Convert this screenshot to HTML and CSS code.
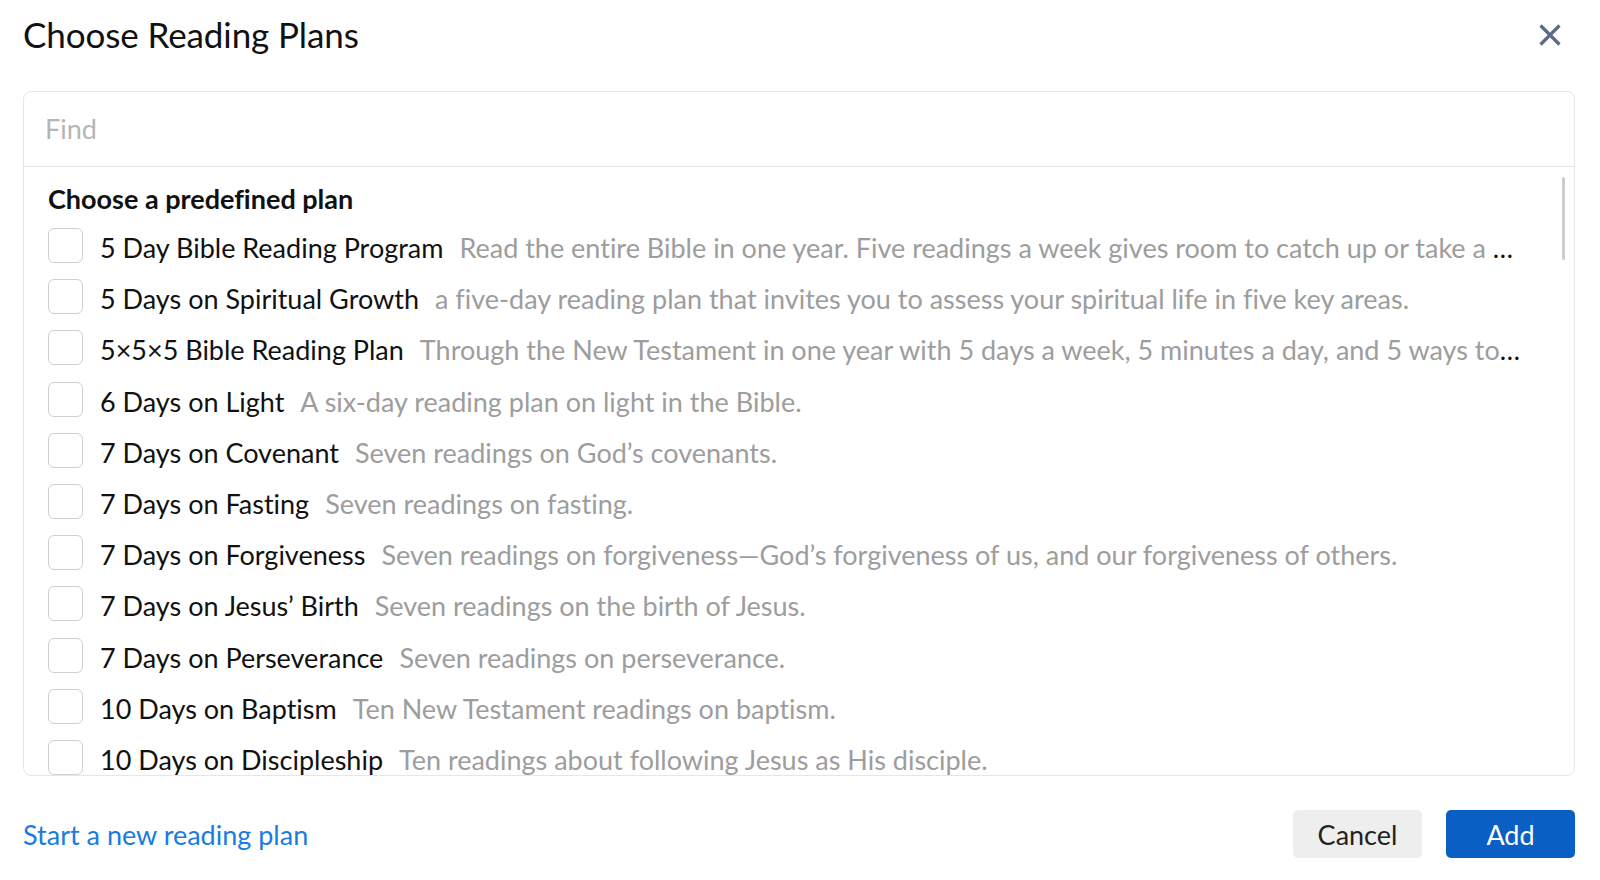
FILE: index.html
```html
<!DOCTYPE html>
<html lang="en">
<head>
<meta charset="utf-8">
<title>Choose Reading Plans</title>
<link rel="stylesheet" href="styles.css">
</head>
<body>
<div class="dialog">
  <header class="header">
    <h1 class="title">Choose Reading Plans</h1>
    <button class="close" aria-label="Close">
      <svg width="24" height="24" viewBox="0 0 24 24"><path d="M2.5 2.5 L21.5 21.5 M21.5 2.5 L2.5 21.5" stroke="#5b6b85" stroke-width="3.2" stroke-linecap="butt" fill="none"/></svg>
    </button>
  </header>
  <div class="card">
    <div class="find"><input class="find-input" type="text" placeholder="Find"></div>
    <div class="list">
      <div class="heading">Choose a predefined plan</div>
      <div class="row"><span class="box"></span><div class="text"><span class="name">5 Day Bible Reading Program</span><span class="desc">Read the entire Bible in one year. Five readings a week gives room to catch up or take a needed break, and to review what you have read.</span></div></div>
      <div class="row"><span class="box"></span><div class="text"><span class="name">5 Days on Spiritual Growth</span><span class="desc">a five-day reading plan that invites you to assess your spiritual life in five key areas.</span></div></div>
      <div class="row"><span class="box"></span><div class="text"><span class="name">5×5×5 Bible Reading Plan</span><span class="desc">Through the New Testament in one year with 5 days a week, 5 minutes a day, and 5 ways to dig deeper.</span></div></div>
      <div class="row"><span class="box"></span><div class="text"><span class="name">6 Days on Light</span><span class="desc">A six-day reading plan on light in the Bible.</span></div></div>
      <div class="row"><span class="box"></span><div class="text"><span class="name">7 Days on Covenant</span><span class="desc">Seven readings on God’s covenants.</span></div></div>
      <div class="row"><span class="box"></span><div class="text"><span class="name">7 Days on Fasting</span><span class="desc">Seven readings on fasting.</span></div></div>
      <div class="row"><span class="box"></span><div class="text"><span class="name">7 Days on Forgiveness</span><span class="desc">Seven readings on forgiveness—God’s forgiveness of us, and our forgiveness of others.</span></div></div>
      <div class="row"><span class="box"></span><div class="text"><span class="name">7 Days on Jesus’ Birth</span><span class="desc">Seven readings on the birth of Jesus.</span></div></div>
      <div class="row"><span class="box"></span><div class="text"><span class="name">7 Days on Perseverance</span><span class="desc">Seven readings on perseverance.</span></div></div>
      <div class="row"><span class="box"></span><div class="text"><span class="name">10 Days on Baptism</span><span class="desc">Ten New Testament readings on baptism.</span></div></div>
      <div class="row"><span class="box"></span><div class="text"><span class="name">10 Days on Discipleship</span><span class="desc">Ten readings about following Jesus as His disciple.</span></div></div>
      <div class="scroll-thumb"></div>
    </div>
  </div>
  <footer class="footer">
    <a class="link" href="#">Start a new reading plan</a>
    <div class="actions">
      <button class="btn btn-cancel">Cancel</button>
      <button class="btn btn-add">Add</button>
    </div>
  </footer>
</div>
</body>
</html>
```

FILE: styles.css
```css
* { box-sizing: border-box; }
html, body { margin: 0; padding: 0; background: #fff; }
body {
  font-family: Lato, "Noto Sans", "Liberation Sans", sans-serif;
  font-variant-ligatures: none;
  color: #111;
  width: 1600px;
  height: 880px;
  overflow: hidden;
}
.dialog {
  padding: 0 25px 0 23px;
  display: flex;
  flex-direction: column;
}
.header {
  height: 67px;
  margin-bottom: 24px;
  display: flex;
  align-items: center;
  justify-content: space-between;
}
.title {
  margin: 0;
  font-size: 35px;
  line-height: 40px;
  font-weight: 400;
  letter-spacing: -0.1px;
  color: #111;
}
.close {
  border: 0;
  background: none;
  padding: 0;
  width: 24px;
  height: 24px;
  margin-right: 13px;
  margin-top: 2px;
  cursor: pointer;
  display: flex;
}
.card {
  border: 1px solid #e6e6e6;
  border-radius: 8px;
  height: 685px;
  display: flex;
  flex-direction: column;
  overflow: hidden;
}
.find {
  height: 75px;
  border-bottom: 1px solid #e6e6e6;
  flex: none;
  display: flex;
}
.find-input {
  border: 0;
  outline: 0;
  width: 100%;
  padding: 0 21px 2px;
  font-family: inherit;
  font-size: 27px;
  color: #111;
  background: transparent;
}
.find-input::placeholder { color: #b5b5b5; }
.list {
  position: relative;
  flex: 1;
  overflow: hidden;
  padding: 18px 52px 0 24px;
}
.heading {
  font-weight: 700;
  font-size: 27px;
  line-height: 28px;
  margin-bottom: 7px;
  color: #111;
}
.row {
  height: 51.2px;
  display: flex;
  align-items: center;
}
.box {
  flex: none;
  width: 35px;
  height: 35px;
  border: 1.5px solid #cfcfcf;
  border-radius: 6px;
  margin-right: 17px;
}
.text {
  flex: 1;
  min-width: 0;
  overflow: hidden;
  white-space: nowrap;
  text-overflow: ellipsis;
  font-size: 27px;
  line-height: 36px;
  color: #111;
  padding-top: 5px;
}
.name { color: #111; }
.desc { color: #9d9d9d; margin-left: 16px; }
.scroll-thumb {
  position: absolute;
  right: 9px;
  top: 10px;
  width: 3px;
  height: 83px;
  border-radius: 2px;
  background: #cdcdcd;
}
.footer {
  margin-top: 34px;
  height: 48px;
  display: flex;
  align-items: center;
  justify-content: space-between;
}
.link {
  display: block;
  color: #1a7be0;
  text-decoration: none;
  font-size: 27px;
  line-height: 36px;
  padding-top: 2px;
}
.actions {
  display: flex;
  gap: 24px;
}
.btn {
  width: 129px;
  height: 48px;
  border: 0;
  border-radius: 5px;
  font-family: inherit;
  font-size: 27px;
  cursor: pointer;
}
.btn-cancel { background: #eeeeee; color: #222; }
.btn-add { background: #0a5fc4; color: #fff; }
```
